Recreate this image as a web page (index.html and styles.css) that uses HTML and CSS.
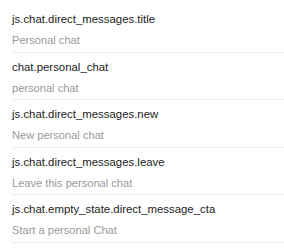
FILE: index.html
```html
<!DOCTYPE html>
<html lang="en">
<head>
    <meta charset="UTF-8">
    <meta name="viewport" content="width=device-width, initial-scale=1.0">
    <title>Translations</title>
    <link rel="stylesheet" href="styles.css">
</head>
<body>
    <!-- Список переводов -->
    <ul class="keys">
        <li class="key-row">
            <div class="key-name">js.chat.direct_messages.title</div>
            <div class="key-value">Personal chat</div>
        </li>
        <li class="key-row">
            <div class="key-name">chat.personal_chat</div>
            <div class="key-value">personal chat</div>
        </li>
        <li class="key-row">
            <div class="key-name">js.chat.direct_messages.new</div>
            <div class="key-value">New personal chat</div>
        </li>
        <li class="key-row">
            <div class="key-name">js.chat.direct_messages.leave</div>
            <div class="key-value">Leave this personal chat</div>
        </li>
        <li class="key-row">
            <div class="key-name">js.chat.empty_state.direct_message_cta</div>
            <div class="key-value">Start a personal Chat</div>
        </li>
    </ul>
</body>
</html>
```

FILE: styles.css
```css
body {
    margin: 0;
    font-family: "Liberation Sans", Arial, sans-serif;
    background-color: #fff;
    color: #222;
}

.keys {
    list-style: none;
    margin: 0 0 0 12px;
    padding: 5.5px 0 0;
}

.key-row {
    padding: 5.7px 0 3.7px;
    border-bottom: 1px solid #ececec;
}

.key-name {
    font-size: 11.4px;
    line-height: 16px;
    color: #222;
}

.key-value {
    margin-top: 5.1px;
    font-size: 11.1px;
    line-height: 16px;
    color: #999;
}
```
